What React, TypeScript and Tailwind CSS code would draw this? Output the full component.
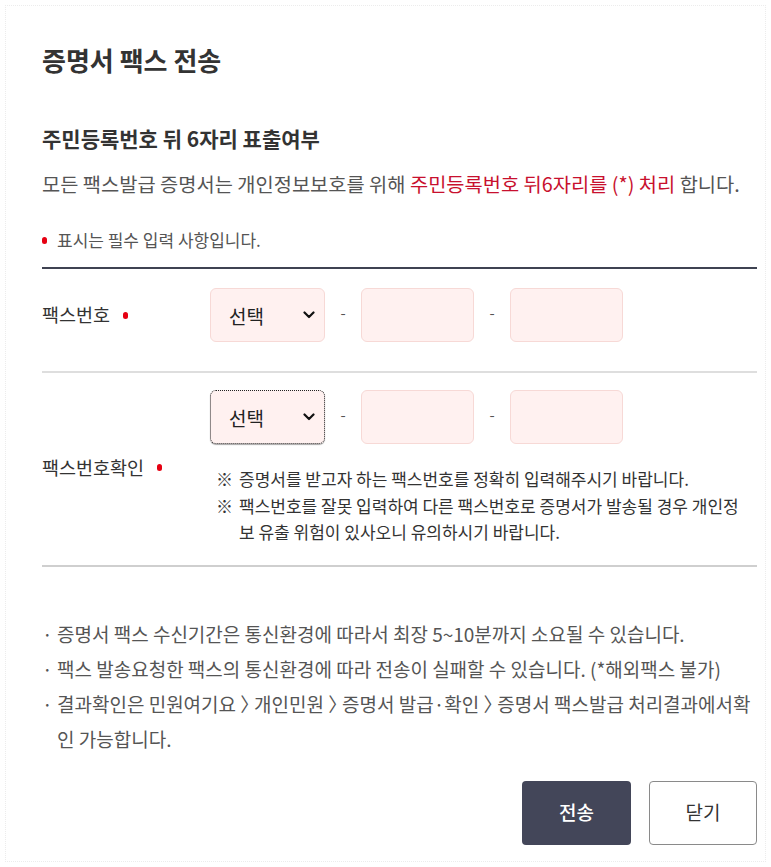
import React from "react";

const F = { fontFamily: '"Noto Sans CJK KR", "Noto Sans", sans-serif' };

function Dot() {
  return <span className="inline-block w-[5px] h-[7px] rounded-full bg-[#e60012]" />;
}

function Chevron() {
  return (
    <svg width="12" height="8" viewBox="0 0 12 8" fill="none">
      <polyline points="1.5,1.5 6,6 10.5,1.5" stroke="#111" strokeWidth="2.2" strokeLinecap="round" strokeLinejoin="round" />
    </svg>
  );
}

function SelectBox({ focused }: { focused?: boolean }) {
  return (
    <div
      className={
        "w-[115px] h-[54px] rounded-[6px] bg-[#fff1f0] flex items-center justify-between pl-[18px] pr-[9px] " +
        (focused ? "border border-dotted border-[#222] shadow-[0_1px_1px_rgba(0,0,0,0.35)]" : "border border-[#f7d9d6]")
      }
    >
      <span className="text-[19px] text-[#222] leading-none">선택</span>
      <Chevron />
    </div>
  );
}

function Dash() {
  return <span className="w-[36px] text-center text-[#555] text-[15px] leading-none -mt-[6px]">-</span>;
}

function InputBox() {
  return <div className="w-[113px] h-[54px] rounded-[6px] bg-[#fff1f0] border border-[#f7d9d6]" />;
}

function Fields({ focused }: { focused?: boolean }) {
  return (
    <div className="flex items-center">
      <SelectBox focused={focused} />
      <Dash />
      <InputBox />
      <Dash />
      <InputBox />
    </div>
  );
}

export default function App() {
  return (
    <div style={F} className="w-[771px] h-[867px] bg-white p-[5px]">
      <div className="h-full border border-dotted border-[#ececec] pt-[38px] pl-[36px] pr-[8px]">
        <h1 className="text-[26px] leading-[32px] font-bold text-[#333]">증명서 팩스 전송</h1>

        <h2 className="mt-[48px] text-[21px] leading-[28px] font-bold text-[#333]">
          주민등록번호 뒤 6자리 표출여부
        </h2>
        <p className="mt-[18px] text-[19.8px] leading-[28px] text-[#555]">
          모든 팩스발급 증명서는 개인정보보호를 위해{" "}
          <span className="text-[#c8102e]">주민등록번호 뒤6자리를 (*) 처리</span> 합니다.
        </p>

        <div className="mt-[30px] flex items-center text-[17px] leading-[24px] text-[#555]">
          <span className="w-[15px] flex items-center">
            <Dot />
          </span>
          <span>표시는 필수 입력 사항입니다.</span>
        </div>

        <div className="mt-[15px] border-t-2 border-[#3f4352]">
          <div className="flex items-center pt-[19px] pb-[29px] border-b-2 border-[#dedede]">
            <div className="w-[168px] flex items-center gap-[13px] text-[18.5px] text-[#333]">
              <span>팩스번호</span>
              <Dot />
            </div>
            <Fields />
          </div>

          <div className="flex items-center pt-[17px] pb-[19px] border-b-2 border-[#cfcfcf]">
            <div className="w-[168px] flex items-center gap-[13px] text-[18.5px] text-[#333] self-center">
              <span>팩스번호확인</span>
              <Dot />
            </div>
            <div className="flex-1">
              <Fields focused />
              <div className="mt-[22px] pl-[6px] pr-[10px] text-[17px] leading-[26.5px] text-[#333]">
                <div className="flex">
                  <span className="w-[23px] shrink-0">※</span>
                  <span>증명서를 받고자 하는 팩스번호를 정확히 입력해주시기 바랍니다.</span>
                </div>
                <div className="flex">
                  <span className="w-[23px] shrink-0">※</span>
                  <span>
                    팩스번호를 잘못 입력하여 다른 팩스번호로 증명서가 발송될 경우 개인정보 유출 위험이 있사오니
                    유의하시기 바랍니다.
                  </span>
                </div>
              </div>
            </div>
          </div>
        </div>

        <ul className="mt-[49px] text-[19px] leading-[35px] text-[#555]">
          <li className="flex">
            <span className="w-[15px] shrink-0">·</span>
            <span>증명서 팩스 수신기간은 통신환경에 따라서 최장 5~10분까지 소요될 수 있습니다.</span>
          </li>
          <li className="flex">
            <span className="w-[15px] shrink-0">·</span>
            <span>팩스 발송요청한 팩스의 통신환경에 따라 전송이 실패할 수 있습니다. (*해외팩스 불가)</span>
          </li>
          <li className="flex">
            <span className="w-[15px] shrink-0">·</span>
            <span className="[font-feature-settings:'halt']">
              결과확인은 민원여기요 〉 개인민원 〉 증명서 발급·확인 〉 증명서 팩스발급 처리결과에서확인 가능합니다.
            </span>
          </li>
        </ul>

        <div className="mt-[25px] flex justify-end gap-[18px]">
          <button className="w-[109px] h-[64px] rounded-[4px] bg-[#434659] text-white text-[19px] font-medium">
            전송
          </button>
          <button className="w-[108px] h-[64px] rounded-[4px] bg-white border border-[#8a8a8a] text-[#333] text-[19px]">
            닫기
          </button>
        </div>
      </div>
    </div>
  );
}
